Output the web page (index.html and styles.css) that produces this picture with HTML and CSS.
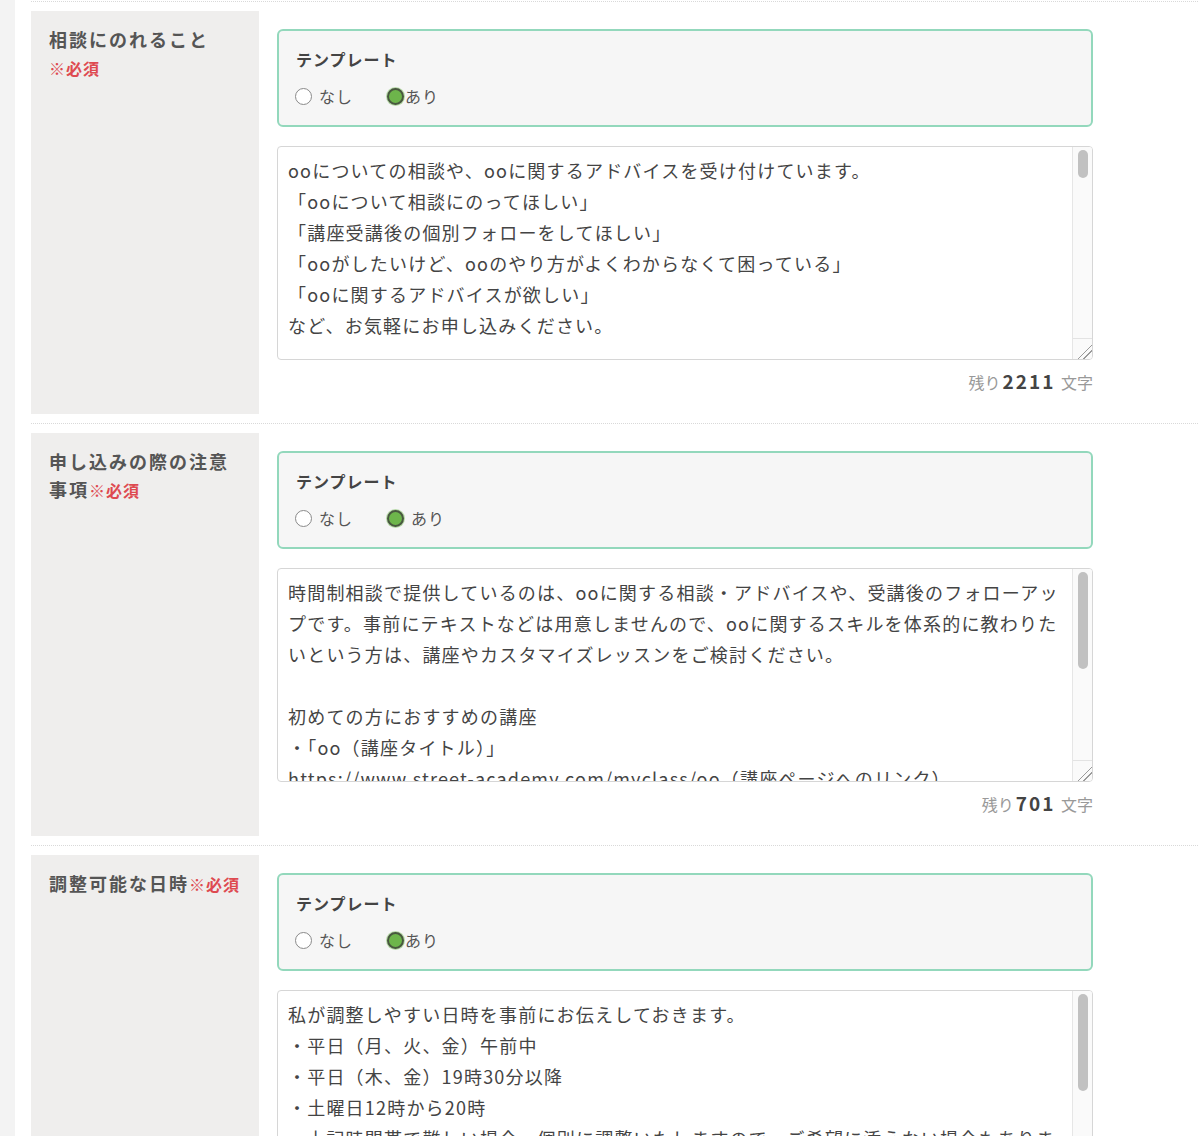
FILE: index.html
```html
<!DOCTYPE html>
<html lang="ja">
<head>
    <meta charset="UTF-8">
    <meta name="viewport" content="width=device-width, initial-scale=1.0">
    <title>時間制相談の設定</title>
    <link rel="stylesheet" href="styles.css">
</head>
<body>
    <div class="side"></div>

    <div class="main">
        <div class="form-list">

            <!-- 相談にのれること -->
            <div class="field">
                <div class="field-label">相談にのれること<span class="required">※必須</span></div>
                <div class="field-body">
                    <div class="template-box">
                        <div class="template-title">テンプレート</div>
                        <div class="template-options">
                            <label class="option"><input type="radio" name="tpl1"><span>なし</span></label>
                            <label class="option tight"><input type="radio" name="tpl1" checked><span>あり</span></label>
                        </div>
                    </div>
                    <div class="text-wrap">
                        <textarea class="field-text">ooについての相談や、ooに関するアドバイスを受け付けています。
「ooについて相談にのってほしい」
「講座受講後の個別フォローをしてほしい」
「ooがしたいけど、ooのやり方がよくわからなくて困っている」
「ooに関するアドバイスが欲しい」
など、お気軽にお申し込みください。</textarea>
                        <div class="scrollbar">
                            <div class="thumb short"></div>
                            <div class="resizer"></div>
                        </div>
                    </div>
                    <div class="counter">残り<b>2211</b> 文字</div>
                </div>
            </div>

            <!-- 申し込みの際の注意事項 -->
            <div class="field">
                <div class="field-label">申し込みの際の注意事項<span class="required">※必須</span></div>
                <div class="field-body">
                    <div class="template-box">
                        <div class="template-title">テンプレート</div>
                        <div class="template-options">
                            <label class="option"><input type="radio" name="tpl2"><span>なし</span></label>
                            <label class="option"><input type="radio" name="tpl2" checked><span>あり</span></label>
                        </div>
                    </div>
                    <div class="text-wrap">
                        <textarea class="field-text">時間制相談で提供しているのは、ooに関する相談・アドバイスや、受講後のフォローアップです。事前にテキストなどは用意しませんので、ooに関するスキルを体系的に教わりたいという方は、講座やカスタマイズレッスンをご検討ください。

初めての方におすすめの講座
・「oo（講座タイトル）」
https://www.street-academy.com/myclass/oo（講座ページへのリンク）

経験者の方におすすめの講座
・「oo（講座タイトル）」
https://www.street-academy.com/myclass/oo（講座ページへのリンク）</textarea>
                        <div class="scrollbar">
                            <div class="thumb"></div>
                            <div class="resizer"></div>
                        </div>
                    </div>
                    <div class="counter">残り<b>701</b> 文字</div>
                </div>
            </div>

            <!-- 調整可能な日時 -->
            <div class="field">
                <div class="field-label">調整可能な日時<span class="required">※必須</span></div>
                <div class="field-body">
                    <div class="template-box">
                        <div class="template-title">テンプレート</div>
                        <div class="template-options">
                            <label class="option"><input type="radio" name="tpl3"><span>なし</span></label>
                            <label class="option tight"><input type="radio" name="tpl3" checked><span>あり</span></label>
                        </div>
                    </div>
                    <div class="text-wrap">
                        <textarea class="field-text">私が調整しやすい日時を事前にお伝えしておきます。
・平日（月、火、金）午前中
・平日（木、金）19時30分以降
・土曜日12時から20時
・上記時間帯で難しい場合、個別に調整いたしますので、ご希望に添えない場合もありますので、
ご了承ください。

お申し込みの際は、希望日時を
第3希望までお知らせください。</textarea>
                        <div class="scrollbar">
                            <div class="thumb"></div>
                            <div class="resizer"></div>
                        </div>
                    </div>
                    <div class="counter">残り<b>1843</b> 文字</div>
                </div>
            </div>

        </div>
    </div>
</body>
</html>
```

FILE: styles.css
```css
body {
    margin: 0;
    display: flex;
    min-height: 100vh;
    background-color: #fff;
    font-family: "Noto Sans CJK JP", "Noto Sans", sans-serif;
    color: #444;
}
.side {
    width: 15px;
    flex-shrink: 0;
    background-color: #f3f3f3;
}
.main {
    flex: 1;
    margin-left: 16px;
    padding-top: 1px;
}
.form-list {
    border-top: 1px dotted #d9d9d9;
}
.field {
    display: grid;
    grid-template-columns: 228px 816px;
    column-gap: 18px;
    padding: 9px 0;
    border-bottom: 1px dotted #d9d9d9;
}
.field-label {
    background-color: #efeeed;
    padding: 14px 12px 0 18px;
    font-size: 18px;
    line-height: 28px;
    font-weight: bold;
    letter-spacing: 2px;
    color: #555;
}
.required {
    font-size: 16px;
    letter-spacing: 1px;
    color: #de4a50;
    white-space: nowrap;
}
.field-body {
    padding: 18px 0 21px;
}
.template-box {
    border: 2px solid #93d8bc;
    border-radius: 6px;
    background-color: #f6f6f6;
    padding: 17px 17px 18px;
}
.template-title {
    font-size: 16px;
    line-height: 22px;
    font-weight: bold;
    letter-spacing: 1px;
    color: #444;
}
.template-options {
    display: flex;
    gap: 35px;
    margin-top: 15px;
    line-height: 22px;
    font-size: 16px;
    letter-spacing: 1px;
    color: #555;
}
.option {
    display: flex;
    align-items: center;
    gap: 7px;
}
.option.tight {
    gap: 1px;
}
.option input {
    appearance: none;
    -webkit-appearance: none;
    width: 17px;
    height: 17px;
    margin: 0 0 0 -1px;
    border: 1px solid #8a8a8a;
    border-radius: 50%;
    background-color: #fff;
}
.option input:checked {
    border: 2px solid #48583f;
    background-color: #6db54b;
    box-shadow: 0 0 0 1px rgba(109, 181, 75, 0.45);
}
.text-wrap {
    position: relative;
    margin-top: 19px;
}
.field-text {
    display: block;
    box-sizing: border-box;
    width: 100%;
    height: 214px;
    margin: 0;
    padding: 8px 30px 8px 10px;
    border: 1px solid #d6d6d6;
    border-radius: 4px;
    font-family: "Noto Sans CJK JP", "Noto Sans", sans-serif;
    font-size: 18px;
    line-height: 31px;
    letter-spacing: 1.2px;
    color: #444;
    background-color: #fff;
    overflow: hidden;
    resize: none;
}
/* textarea scrollbar drawn over the right edge */
.scrollbar {
    position: absolute;
    top: 1px;
    right: 1px;
    bottom: 1px;
    width: 20px;
    box-sizing: border-box;
    display: flex;
    flex-direction: column;
    background-color: #fafafa;
    border-left: 1px solid #e6e6e6;
    border-radius: 0 3px 3px 0;
}
.thumb {
    height: 97px;
    margin: 3px 4px 0 5px;
    border-radius: 5px;
    background-color: #c1c1c1;
}
.thumb.short {
    height: 28px;
}
.resizer {
    margin-top: auto;
    height: 20px;
    border-top: 1px solid #e3e3e3;
    background: linear-gradient(135deg, transparent 0 62%, #9a9a9a 62% 66%, transparent 66% 76%, #9a9a9a 76% 80%, transparent 80%);
}
.counter {
    margin-top: 10px;
    text-align: right;
    font-size: 16px;
    line-height: 22px;
    color: #999;
}
.counter b {
    margin: 0 2px 0 2px;
    font-size: 19px;
    letter-spacing: 2px;
    color: #444;
}
```
